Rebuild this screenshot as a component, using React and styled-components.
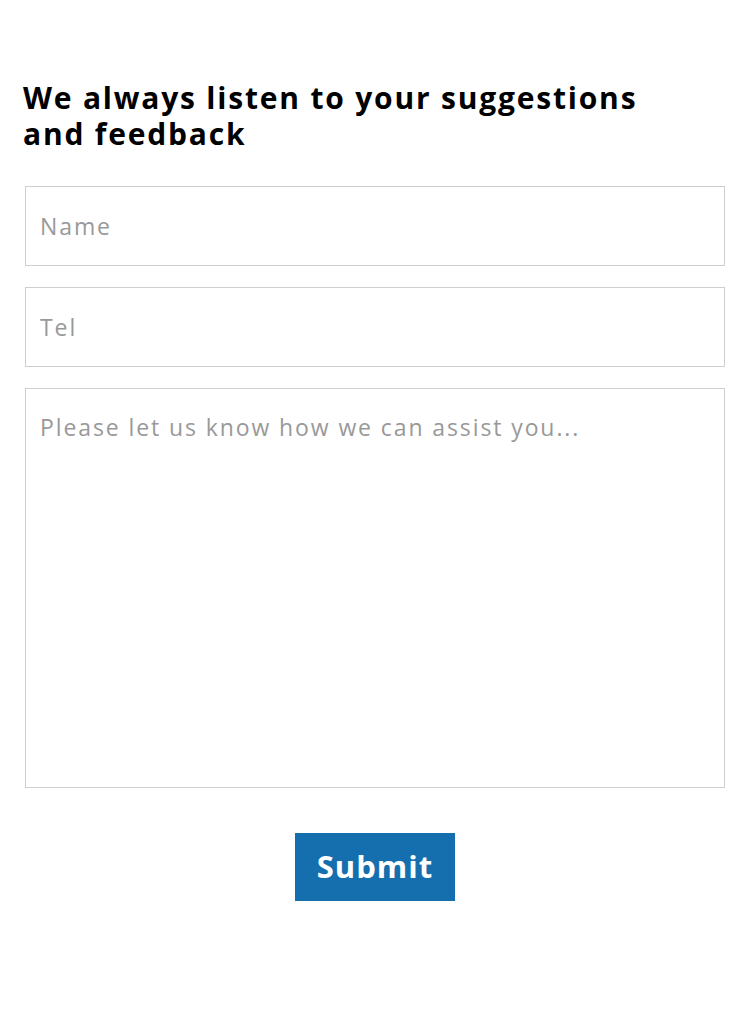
import React from "react";
import styled, { createGlobalStyle } from "styled-components";

const Global = createGlobalStyle`
  html, body { margin: 0; padding: 0; background: #fff; }
  body { font-family: "Open Sans", "Noto Sans", sans-serif; }
  * { box-sizing: border-box; }
`;

const Page = styled.main`
  padding: 80px 25px 60px;
`;

const Title = styled.h2`
  margin: 0 0 34px -2px;
  font-size: 30px;
  line-height: 36px;
  font-weight: 700;
  letter-spacing: 1.8px;
  color: #000;
  max-width: 660px;
`;

const Form = styled.form`
  display: flex;
  flex-direction: column;
  gap: 21px;
`;

const fieldCss = `
  width: 100%;
  border: 1px solid #cfcfcf;
  border-radius: 0;
  background: #fff;
  font-family: "Open Sans", "Noto Sans", sans-serif;
  font-size: 23px;
  letter-spacing: 1.9px;
  color: #333;
  outline: none;
  padding: 0 14px;
  &::placeholder { color: #999; opacity: 1; }
`;

const Input = styled.input`
  ${fieldCss}
  height: 80px;
`;

const TextArea = styled.textarea`
  ${fieldCss}
  height: 400px;
  padding-top: 23px;
  resize: none;
  line-height: 30px;
`;

const ButtonRow = styled.div`
  display: flex;
  justify-content: center;
  margin-top: 24px;
`;

const SubmitButton = styled.button`
  width: 160px;
  height: 68px;
  border: none;
  padding: 0 0 3px;
  background: #156eae;
  color: #fff;
  font-family: "Open Sans", "Noto Sans", sans-serif;
  font-weight: 700;
  font-size: 31px;
  letter-spacing: 1px;
  cursor: pointer;
`;

export default function App() {
  return (
    <>
      <Global />
      <Page>
        <Title>We always listen to your suggestions and feedback</Title>
        <Form onSubmit={(e) => e.preventDefault()}>
          <Input type="text" placeholder="Name" />
          <Input type="tel" placeholder="Tel" />
          <TextArea placeholder="Please let us know how we can assist you..." />
          <ButtonRow>
            <SubmitButton type="submit">Submit</SubmitButton>
          </ButtonRow>
        </Form>
      </Page>
    </>
  );
}
